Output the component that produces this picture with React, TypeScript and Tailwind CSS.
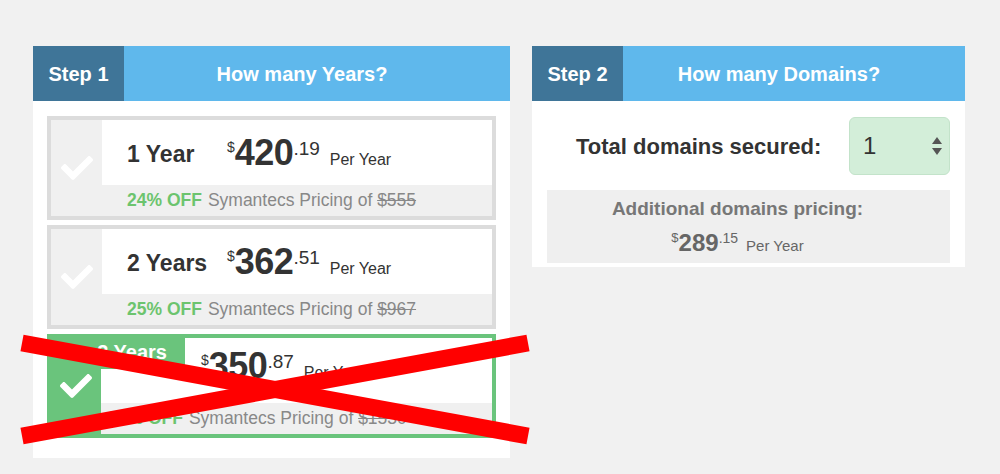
import { FaCheck } from "react-icons/fa";

type Option = {
  label: string;
  dollars: string;
  cents: string;
  off: string;
  was: string;
  selected?: boolean;
};

const options: Option[] = [
  { label: "1 Year", dollars: "420", cents: ".19", off: "24% OFF", was: "$555" },
  { label: "2 Years", dollars: "362", cents: ".51", off: "25% OFF", was: "$967" },
  { label: "3 Years", dollars: "350", cents: ".87", off: "31% OFF", was: "$1530", selected: true },
];

function Header({ step, title }: { step: string; title: string }) {
  return (
    <div className="flex h-[55px] text-white font-bold text-[20px]">
      <div className="w-[91px] bg-[#3f7598] flex items-center justify-center">{step}</div>
      <div className="flex-1 bg-[#5fb8ec] flex items-center justify-center pr-[30px]">{title}</div>
    </div>
  );
}

function Price({ dollars, cents }: { dollars: string; cents: string }) {
  return (
    <div className="flex items-baseline text-[#333] leading-none">
      <span className="text-[14px] relative -top-[13px]">$</span>
      <span className="text-[36px] font-bold tracking-[-0.5px]">{dollars}</span>
      <span className="text-[19px] relative -top-[10px]">{cents}</span>
      <span className="text-[16px] ml-[10px]">Per Year</span>
    </div>
  );
}

function OptionCard({ o }: { o: Option }) {
  const sel = o.selected;
  return (
    <div
      className={
        sel
          ? "flex h-[104px] border-4 border-[#6ac47c]"
          : "flex h-[104px] border-4 border-[#dcdcdc]"
      }
    >
      <div
        className={
          sel
            ? "w-[50px] bg-[#6ac47c] flex items-center justify-center text-white"
            : "w-[51px] bg-[#f0f0f0] flex items-center justify-center text-white"
        }
      >
        <FaCheck size={32} />
      </div>
      <div className="flex-1 flex flex-col">
        {sel ? (
          <div className="h-[65px] bg-white flex items-start">
            <div className="w-[84px] h-[31px] bg-[#6ac47c] relative">
              <span className="absolute right-[18px] top-[4px] whitespace-nowrap text-white font-bold text-[20px] leading-none">
                {o.label}
              </span>
            </div>
            <div className="ml-[16px] pt-[10px]">
              <Price dollars={o.dollars} cents={o.cents} />
            </div>
          </div>
        ) : (
          <div className="h-[65px] bg-white flex items-baseline pl-[25px] pt-[15px] leading-none">
            <span className="w-[100px] text-[23px] font-bold text-[#333] relative -top-[3px]">{o.label}</span>
            <Price dollars={o.dollars} cents={o.cents} />
          </div>
        )}
        <div
          className={
            sel
              ? "flex-1 bg-[#f0f0f0] flex items-center pl-[7px] text-[17.5px] text-[#888]"
              : "flex-1 bg-[#f0f0f0] flex items-center pl-[25px] text-[17.5px] text-[#888]"
          }
        >
          <span className="font-bold text-[#6cc46e] mr-[6px]">{o.off}</span>
          <span>Symantecs Pricing of&nbsp;</span>
          <span className="line-through">{o.was}</span>
        </div>
      </div>
    </div>
  );
}

export default function App() {
  return (
    <div
      className="min-h-screen bg-[#f1f1f1] flex items-start pl-[33px] pt-[46px] gap-[22px] relative"
      style={{ fontFamily: '"Liberation Sans", Arial, sans-serif' }}
    >
      <div className="w-[477px] bg-white">
        <Header step="Step 1" title="How many Years?" />
        <div className="px-[14px] pt-[15px] pb-[20px] flex flex-col gap-[5px]">
          {options.map((o) => (
            <OptionCard key={o.label} o={o} />
          ))}
        </div>
      </div>

      <div className="w-[433px] bg-white">
        <Header step="Step 2" title="How many Domains?" />
        <div className="pt-[16px] pb-[4px] px-[15px]">
          <div className="flex items-center justify-between pl-[29px]">
            <span className="text-[22px] font-bold text-[#333]">Total domains secured:</span>
            <div className="w-[101px] h-[58px] rounded-[6px] bg-[#d3eed9] border border-[#c3e3ca] flex items-center justify-between pl-[13px] pr-[6px]">
              <span className="text-[24px] text-[#333]">1</span>
              <svg width="12" height="20" viewBox="0 0 12 20">
                <path d="M6 1 L11 8 H1 Z" fill="#555" />
                <path d="M6 19 L11 12 H1 Z" fill="#555" />
              </svg>
            </div>
          </div>
          <div className="mt-[15px] h-[73px] bg-[#efefef] flex flex-col items-center justify-center pr-[22px]">
            <div className="text-[19px] font-bold text-[#777] leading-none">Additional domains pricing:</div>
            <div className="flex items-baseline text-[#666] leading-none mt-[13px]">
              <span className="text-[13px] relative -top-[9px]">$</span>
              <span className="text-[24px] font-bold">289</span>
              <span className="text-[14px] relative -top-[8px]">.15</span>
              <span className="text-[15px] ml-[8px]">Per Year</span>
            </div>
          </div>
        </div>
      </div>

      <svg
        className="absolute left-[20px] top-[325px] pointer-events-none"
        width="512"
        height="125"
        viewBox="0 0 512 125"
      >
        <line x1="2" y1="18" x2="508" y2="111" stroke="#ff0000" strokeWidth="17" />
        <line x1="2" y1="111" x2="508" y2="18" stroke="#ff0000" strokeWidth="17" />
      </svg>
    </div>
  );
}
